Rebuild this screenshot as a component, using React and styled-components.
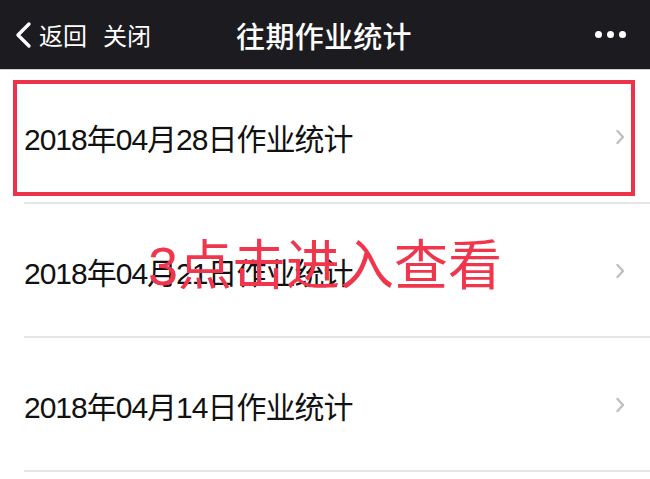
import React from "react";
import styled, { createGlobalStyle } from "styled-components";

const Global = createGlobalStyle`
  html, body {
    margin: 0;
    padding: 0;
    background: #fff;
  }
  body {
    font-family: "Liberation Sans", "Noto Sans CJK SC", sans-serif;
    width: 650px;
    height: 479px;
    overflow: hidden;
  }
`;

const Page = styled.div`
  width: 650px;
  height: 479px;
  background: #fff;
`;

const NavBar = styled.div`
  height: 70px;
  background: #1c1b20;
  border-bottom: 1px solid #cfcfd2;
  box-sizing: border-box;
  display: grid;
  grid-template-columns: 1fr auto 1fr;
  align-items: center;
  color: #fff;
  padding: 0 16px 0 14px;
`;

const NavLeft = styled.div`
  display: flex;
  align-items: center;
  font-size: 24px;
  font-family: "Noto Sans CJK SC", sans-serif;
`;

const NavLink = styled.span`
  margin-left: ${p => p.gap || 0}px;
  line-height: 1;
`;

const Title = styled.div`
  font-family: "Noto Sans CJK SC", sans-serif;
  font-size: 29px;
  font-weight: 500;
  letter-spacing: 0.3px;
`;

const NavRight = styled.div`
  display: flex;
  justify-content: flex-end;
  gap: 5px;
  padding-right: 8px;
`;

const Dot = styled.span`
  width: 7px;
  height: 7px;
  border-radius: 50%;
  background: #fff;
`;

const List = styled.div`
  position: relative;
`;

const Row = styled.div`
  position: relative;
  height: 134px;
  display: flex;
  align-items: center;
  padding: 0 24px;
  &::after {
    content: "";
    position: absolute;
    left: 24px;
    right: 0;
    bottom: 0;
    height: 2px;
    background: #e6e6e8;
  }
`;

const Label = styled.div`
  flex: 1;
  font-size: 30px;
  color: #111;
  letter-spacing: -1px;
  font-family: "Liberation Sans", "Noto Sans CJK SC", sans-serif;
`;

const Chevron = styled.svg`
  width: 10px;
  height: 16px;
  margin-right: 1px;
`;

const Highlight = styled.div`
  position: absolute;
  left: 13px;
  right: 15px;
  top: 10px;
  bottom: 8px;
  border: 4px solid #ec3349;
  pointer-events: none;
`;

const Callout = styled.div`
  position: absolute;
  left: 148px;
  top: 169px;
  font-size: 54px;
  line-height: 1;
  color: #f0364c;
  font-family: "Liberation Sans", "Noto Sans CJK SC", sans-serif;
  white-space: nowrap;
`;

const items = [
  "2018年04月28日作业统计",
  "2018年04月21日作业统计",
  "2018年04月14日作业统计"
];

export default function App() {
  return (
    <Page>
      <Global />
      <NavBar>
        <NavLeft>
          <svg width="20" height="28" viewBox="0 0 20 28">
            <path
              d="M15 3 L4 14 L15 25"
              fill="none"
              stroke="#fff"
              strokeWidth="3.4"
              strokeLinecap="round"
              strokeLinejoin="round"
            />
          </svg>
          <NavLink gap={5}>返回</NavLink>
          <NavLink gap={16}>关闭</NavLink>
        </NavLeft>
        <Title>往期作业统计</Title>
        <NavRight>
          <Dot />
          <Dot />
          <Dot />
        </NavRight>
      </NavBar>
      <List>
        {items.map((text, i) => (
          <Row key={text}>
            <Label>{text}</Label>
            <Chevron viewBox="0 0 10 16">
              <path
                d="M2.5 2 L8 8 L2.5 14"
                fill="none"
                stroke="#bfbfc4"
                strokeWidth="2.4"
                strokeLinecap="round"
                strokeLinejoin="round"
              />
            </Chevron>
            {i === 0 && <Highlight />}
          </Row>
        ))}
        <Callout>3点击进入查看</Callout>
      </List>
    </Page>
  );
}
